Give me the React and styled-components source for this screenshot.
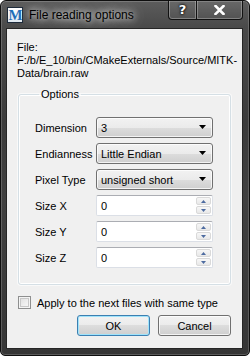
import React from 'react';
import styled, { createGlobalStyle } from 'styled-components';

const Global = createGlobalStyle`
  html, body { margin: 0; padding: 0; background: #fff; }
  body { font-family: "Liberation Sans", Arial, sans-serif; }
`;

function App() {
  return (
    <>
      <Global />
      <Window>
        <TitleBar>
          <AppIcon>M</AppIcon>
          <Title>File reading options</Title>
          <Captions>
            <CaptionBtn $w={29} $first>?</CaptionBtn>
            <CaptionBtn $w={46} $last>
              <svg width="11" height="10" viewBox="0 0 11 10">
                <path d="M1.5 1 L9.5 9 M9.5 1 L1.5 9" stroke="#fff" strokeWidth="2.6" strokeLinecap="square" />
              </svg>
            </CaptionBtn>
          </Captions>
        </TitleBar>

        <Client>
          <FileText>
            File:<br />
            F:/b/E_10/bin/CMakeExternals/Source/MITK-<br />
            Data/brain.raw
          </FileText>

          <Group>
            <Legend>Options</Legend>
            <FormGrid>
              <Label>Dimension</Label>
              <Combo value="3" />
              <Label>Endianness</Label>
              <Combo value="Little Endian" />
              <Label>Pixel Type</Label>
              <Combo value="unsigned short" />
              <Label>Size X</Label>
              <Spin value="0" />
              <Label>Size Y</Label>
              <Spin value="0" />
              <Label>Size Z</Label>
              <Spin value="0" />
            </FormGrid>
          </Group>

          <CheckRow>
            <CheckBox />
            <span>Apply to the next files with same type</span>
          </CheckRow>

          <ButtonRow>
            <PushButton $default>OK</PushButton>
            <PushButton>Cancel</PushButton>
          </ButtonRow>
        </Client>
      </Window>
    </>
  );
}

function Combo({ value }) {
  return (
    <ComboBox>
      <span>{value}</span>
      <svg width="8" height="5" viewBox="0 0 8 5">
        <path d="M0 0 H7 L3.5 4 Z" fill="#000" />
      </svg>
    </ComboBox>
  );
}

function Spin({ value }) {
  return (
    <SpinBox>
      <SpinValue>{value}</SpinValue>
      <SpinButtons>
        <SpinBtn>
          <svg width="5" height="3" viewBox="0 0 5 3">
            <path d="M0 3 H5 L2.5 0 Z" fill="#4d6ba0" />
          </svg>
        </SpinBtn>
        <SpinBtn>
          <svg width="5" height="3" viewBox="0 0 5 3">
            <path d="M0 0 H5 L2.5 3 Z" fill="#4d6ba0" />
          </svg>
        </SpinBtn>
      </SpinButtons>
    </SpinBox>
  );
}

const Window = styled.div`
  width: 250px;
  height: 356px;
  box-sizing: border-box;
  border: 1px solid #0e0e0e;
  border-radius: 6px 6px 5px 5px;
  background: linear-gradient(to bottom, #5c5c5c 0px, #4a4a4a 26px, #3b3b3b 120px, #404040 200px, #363636 100%);
  box-shadow: inset 0 0 0 1px rgba(255, 255, 255, 0.18);
  display: flex;
  flex-direction: column;
  padding: 0 6px 6px 5px;
  overflow: hidden;
`;

const TitleBar = styled.div`
  height: 27px;
  display: flex;
  align-items: flex-start;
  flex-shrink: 0;
`;

const AppIcon = styled.span`
  width: 14px;
  height: 14px;
  margin: 6px 0 0 1px;
  border: 1px solid #1d2a3a;
  background: linear-gradient(to bottom, #ffffff, #dfe8f0);
  color: #1f6fb8;
  font-family: "Liberation Serif", "Times New Roman", serif;
  font-weight: bold;
  font-size: 15px;
  line-height: 15px;
  text-align: center;
  letter-spacing: -1px;
  overflow: hidden;
`;

const Title = styled.span`
  margin: 7px 0 0 6px;
  font-family: "Liberation Sans", Arial, sans-serif;
  font-size: 12px;
  line-height: 14px;
  color: #000;
  text-shadow: 0 0 6px rgba(255, 255, 255, 0.9), 0 0 12px rgba(255, 255, 255, 0.7), 0 0 18px rgba(255, 255, 255, 0.5);
  flex: 1;
  white-space: nowrap;
`;

const Captions = styled.div`
  display: flex;
  margin-top: -1px;
`;

const CaptionBtn = styled.div`
  width: ${(p) => p.$w}px;
  height: 20px;
  box-sizing: border-box;
  display: flex;
  align-items: center;
  justify-content: center;
  color: #fff;
  font-family: "DejaVu Sans", sans-serif;
  font-weight: bold;
  font-size: 13px;
  text-shadow: 0 0 3px #000, 0 0 2px #000;
  border: 1px solid rgba(10, 10, 10, 0.9);
  border-top: none;
  border-left: ${(p) => (p.$first ? '1px solid rgba(10,10,10,0.9)' : 'none')};
  border-radius: ${(p) => (p.$first ? '0 0 0 4px' : p.$last ? '0 0 4px 0' : '0')};
  background: linear-gradient(to bottom, rgba(255, 255, 255, 0.08), rgba(255, 255, 255, 0.02));
  box-shadow: inset 0 0 0 1px rgba(255, 255, 255, 0.28);
`;

const Client = styled.div`
  flex: 1;
  background: #f0f0f0;
  border: 1px solid #262626;
  display: flex;
  flex-direction: column;
  padding: 12px 11px 0 10px;
  font-family: "Liberation Sans", Arial, sans-serif;
  font-size: 11px;
  color: #000;
`;

const FileText = styled.div`
  line-height: 13px;
  white-space: nowrap;
`;

const Group = styled.fieldset`
  margin: 8px 0 0 1px;
  padding: 0 17px 16px 16px;
  border: 1px solid #d5dfe5;
  border-radius: 3px;
  box-shadow: inset 0 0 0 1px #fff, 0 0 0 1px rgba(255, 255, 255, 0.6);
  min-width: 0;
`;

const Legend = styled.legend`
  padding: 0 2px;
  margin-left: 4px;
  line-height: 13px;
  font-size: 11px;
`;

const FormGrid = styled.div`
  display: grid;
  grid-template-columns: 61px 1fr;
  grid-auto-rows: 21px;
  row-gap: 5px;
  margin-top: 16px;
`;

const Label = styled.div`
  display: flex;
  align-items: center;
  white-space: nowrap;
`;

const ComboBox = styled.div`
  box-sizing: border-box;
  height: 21px;
  border: 1px solid #707070;
  border-radius: 3px;
  background: linear-gradient(to bottom, #f2f2f2 0%, #ebebeb 50%, #dddddd 50%, #cfcfcf 100%);
  box-shadow: inset 0 0 0 1px rgba(255, 255, 255, 0.75);
  display: flex;
  align-items: center;
  justify-content: space-between;
  padding: 0 5px 0 4px;
  white-space: nowrap;
`;

const SpinBox = styled.div`
  box-sizing: border-box;
  height: 21px;
  border: 1px solid #dbdfe6;
  border-top-color: #abadb3;
  border-radius: 2px;
  background: #fff;
  display: flex;
  align-items: stretch;
`;

const SpinValue = styled.div`
  flex: 1;
  display: flex;
  align-items: center;
  padding-left: 4px;
`;

const SpinButtons = styled.div`
  width: 15px;
  display: flex;
  flex-direction: column;
  gap: 1px;
  padding: 1px 1px 1px 0;
`;

const SpinBtn = styled.div`
  flex: 1;
  display: flex;
  align-items: center;
  justify-content: center;
  border: 1px solid #d9d9d9;
  border-radius: 2px;
  background: linear-gradient(to bottom, #f7f7f7, #e8e8e8);
`;

const CheckRow = styled.label`
  display: flex;
  align-items: center;
  gap: 6px;
  margin: 11px 0 0 1px;
  white-space: nowrap;
`;

const CheckBox = styled.span`
  width: 13px;
  height: 13px;
  box-sizing: border-box;
  border: 1px solid #8e8f8f;
  background: linear-gradient(135deg, #dcdcdc 0%, #f0f0f0 60%, #fafafa 100%);
  box-shadow: inset 0 0 0 1px #f4f4f4, inset 0 0 0 2px #c8c8c8;
`;

const ButtonRow = styled.div`
  display: flex;
  justify-content: flex-end;
  gap: 8px;
  margin-top: 6px;
`;

const PushButton = styled.button`
  width: 73px;
  height: 21px;
  box-sizing: border-box;
  font-family: "Liberation Sans", Arial, sans-serif;
  font-size: 11px;
  color: #000;
  border: 1px solid ${(p) => (p.$default ? '#3c7fb1' : '#707070')};
  border-radius: 3px;
  background: linear-gradient(to bottom, #f2f2f2 0%, #ebebeb 50%, #dddddd 50%, #cfcfcf 100%);
  box-shadow: ${(p) => (p.$default ? 'inset 0 0 0 1px #9fe3fb' : 'inset 0 0 0 1px rgba(255,255,255,0.75)')};
  padding: 0;
`;

export default App;
